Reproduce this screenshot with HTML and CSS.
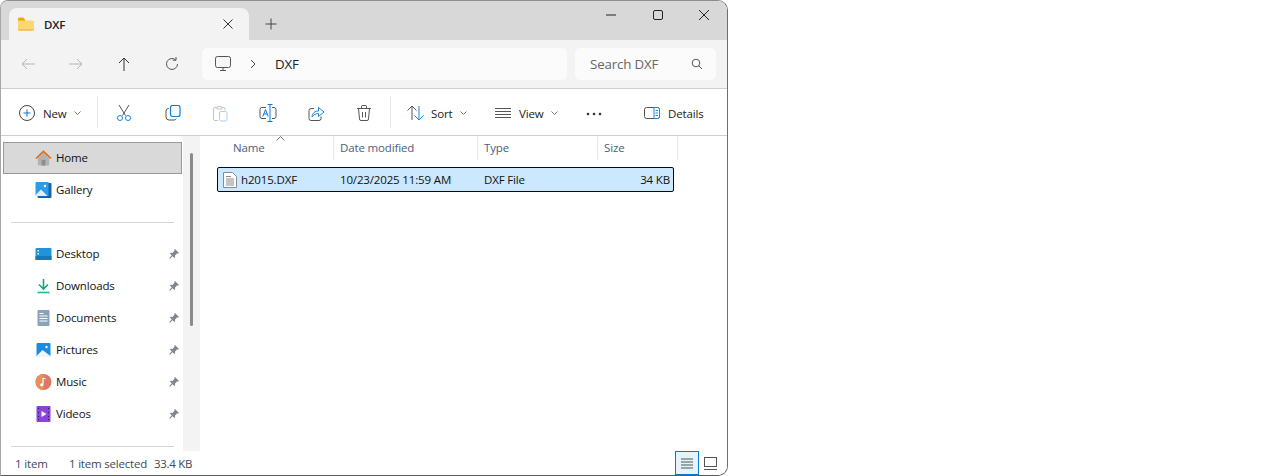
FILE: index.html
```html
<!DOCTYPE html>
<html lang="en">
<head>
<meta charset="utf-8">
<title>DXF - File Explorer</title>
<link rel="stylesheet" href="styles.css">
</head>
<body>
<div class="window">
  <header class="titlebar">
    <div class="tab">
      <svg class="tab-folder" width="16" height="14" viewBox="0 0 16 14"><path d="M0 2a1.500 1.500 0 0 1 1.500-1.500h3.600L7 2.500v2H0z" fill="#f0a800"/><path d="M0 3.500h14.500A1.500 1.500 0 0 1 16 5v7a1.500 1.500 0 0 1-1.500 1.500h-13A1.500 1.500 0 0 1 0 12z" fill="#fcd672"/><path d="M0 12.500h16v.1a1 1 0 0 1-1 .9H1a1 1 0 0 1-1-.9z" fill="#e8ac2e"/></svg>
      <span class="tab-title">DXF</span>
      <svg class="tab-close" width="12" height="12" viewBox="0 0 12 12"><path d="M1.500 1.500l9 9M10.500 1.500l-9 9" stroke="#333" fill="none"/></svg>
    </div>
    <svg class="tab-new" width="12" height="12" viewBox="0 0 12 12"><path d="M6 .5v11M.5 6h11" stroke="#444" fill="none"/></svg>
    <div class="caption">
      <svg width="46" height="16" viewBox="0 0 46 16"><path d="M17 8h10" stroke="#222" fill="none"/></svg>
      <svg width="46" height="16" viewBox="0 0 46 16"><rect x="18.500" y="3.500" width="9" height="9" rx="1.500" stroke="#222" fill="none"/></svg>
      <svg width="46" height="16" viewBox="0 0 46 16"><path d="M18 3l10 10M28 3L18 13" stroke="#222" fill="none"/></svg>
    </div>
  </header>

  <nav class="addressbar">
    <svg class="nav-icon" width="16" height="16" viewBox="0 0 16 16"><path d="M15 8H2M7 3L2 8l5 5" stroke="#b4b4b4" fill="none"/></svg>
    <svg class="nav-icon" width="16" height="16" viewBox="0 0 16 16"><path d="M1 8h13M9 3l5 5-5 5" stroke="#b4b4b4" fill="none"/></svg>
    <svg class="nav-icon" width="16" height="16" viewBox="0 0 16 16"><path d="M8 15V2M3 7l5-5 5 5" stroke="#333" fill="none"/></svg>
    <svg class="nav-icon" width="16" height="16" viewBox="0 0 16 16"><path d="M13.500 8a5.500 5.500 0 1 1-1.800-4.100M12 1v3.200H8.800" stroke="#555" fill="none"/></svg>
    <div class="path-box">
      <svg width="16" height="16" viewBox="0 0 16 16"><rect x=".5" y=".5" width="15" height="11" rx="2" fill="#f6f6f6" stroke="#555"/><path d="M5 14.500h6M8 12v2" stroke="#555" fill="none"/></svg>
      <svg class="path-sep" width="6" height="10" viewBox="0 0 6 10"><path d="M1 1l4 4-4 4" stroke="#444" fill="none"/></svg>
      <span class="path-text">DXF</span>
    </div>
    <div class="search-box">
      <span>Search DXF</span>
      <svg width="12" height="12" viewBox="0 0 12 12"><circle cx="5" cy="5" r="3.800" stroke="#555" fill="none"/><path d="M7.800 7.800L11 11" stroke="#555" fill="none"/></svg>
    </div>
  </nav>

  <div class="toolbar">
    <div class="tool tool-new">
      <svg width="16" height="16" viewBox="0 0 16 16"><circle cx="8" cy="8" r="7.500" stroke="#444" fill="none"/><path d="M8 4.500v7M4.500 8h7" stroke="#0a6fd0" fill="none"/></svg>
      <span>New</span>
      <svg class="chev" width="7" height="4" viewBox="0 0 7 4"><path d="M.5.500l3 3 3-3" stroke="#777" fill="none"/></svg>
    </div>
    <div class="divider"></div>
    <div class="icons">
      <svg width="16" height="16" viewBox="0 0 16 16"><path d="M3 0l6.500 10.500M13 0L6.500 10.500" stroke="#555" fill="none"/><circle cx="4" cy="13" r="2.500" stroke="#1a86e0" fill="none"/><circle cx="12" cy="13" r="2.500" stroke="#1a86e0" fill="none"/></svg>
      <svg width="16" height="16" viewBox="0 0 16 16"><path d="M4 3.500h-.5a2.500 2.500 0 0 0-2.500 2.500v6a3 3 0 0 0 3 3h5a2.500 2.500 0 0 0 2.300-1.500" stroke="#555" fill="none"/><rect x="5.500" y=".5" width="9.500" height="11" rx="2" stroke="#0a7ae0" stroke-width="1.200" fill="none"/></svg>
      <svg width="16" height="17" viewBox="0 0 16 17"><path d="M5 2.500H3a1.500 1.500 0 0 0-1.500 1.500v10A1.500 1.500 0 0 0 3 15.500h3M5 2.500a1 1 0 0 1 1-1h3a1 1 0 0 1 1 1V4H5z" stroke="#c4c4c4" fill="none"/><path d="M10 2.500h1.500A1.500 1.500 0 0 1 13 4v1.500" stroke="#c4c4c4" fill="none"/><rect x="7.500" y="6.500" width="7.500" height="9.500" rx="1.500" stroke="#a8d0f2" fill="none"/></svg>
      <svg width="18" height="18" viewBox="0 0 18 18"><path d="M7 3.500H3a2 2 0 0 0-2 2v7a2 2 0 0 0 2 2h4M13 3.500h2a2 2 0 0 1 2 2v7a2 2 0 0 1-2 2h-2" stroke="#555" fill="none"/><path d="M3.800 12.500L6.500 5.500l2.700 7M4.800 10h3.400" stroke="#0a7ae0" fill="none"/><path d="M8.500.5h5M8.500 17.500h5M11 .5v17" stroke="#0a7ae0" fill="none"/></svg>
      <svg width="17" height="17" viewBox="0 0 17 17"><path d="M6 3.500H3a2 2 0 0 0-2 2v8a2 2 0 0 0 2 2h8a2 2 0 0 0 2-2v-2" stroke="#555" fill="none"/><path d="M4 12c.3-4 2.800-6 6.500-6V2.500L16 7l-5.500 4.500V8.500C8 8.500 5.500 9.500 4 12z" stroke="#1a86e0" fill="#fff"/></svg>
      <svg width="16" height="16" viewBox="0 0 16 16"><path d="M1 3.500h14M5.500 3V1.500a1 1 0 0 1 1-1h3a1 1 0 0 1 1 1V3M2.500 3.500l1 10.500a1.500 1.500 0 0 0 1.500 1.500h6a1.500 1.500 0 0 0 1.500-1.500l1-10.500M6.500 7v5.500M9.500 7v5.500" stroke="#555" fill="none"/></svg>
    </div>
    <div class="divider divider-two"></div>
    <div class="tool tool-sort">
      <svg width="17" height="16" viewBox="0 0 17 16"><path d="M5 15V1M.5 5.500L5 1l4.500 4.500" stroke="#555" fill="none"/><path d="M12 1v14M7.500 10.500L12 15l4.500-4.500" stroke="#1a86e0" fill="none"/></svg>
      <span>Sort</span>
      <svg class="chev" width="7" height="4" viewBox="0 0 7 4"><path d="M.5.500l3 3 3-3" stroke="#777" fill="none"/></svg>
    </div>
    <div class="tool tool-view">
      <svg width="16" height="10" viewBox="0 0 16 10"><path d="M0 .5h16M0 3.500h16M0 6.500h16M0 9.500h16" stroke="#555" fill="none"/></svg>
      <span>View</span>
      <svg class="chev" width="7" height="4" viewBox="0 0 7 4"><path d="M.5.500l3 3 3-3" stroke="#777" fill="none"/></svg>
    </div>
    <svg class="more" width="16" height="4" viewBox="0 0 16 4"><circle cx="2" cy="2" r="1.300" fill="#333"/><circle cx="8" cy="2" r="1.300" fill="#333"/><circle cx="14" cy="2" r="1.300" fill="#333"/></svg>
    <div class="tool tool-details">
      <svg width="16" height="12" viewBox="0 0 16 12"><rect x=".5" y=".5" width="15" height="11" rx="2" stroke="#555" fill="none"/><path d="M10 .5h3.500a2 2 0 0 1 2 2v7a2 2 0 0 1-2 2H10z" stroke="#1a86e0" fill="#fff"/><path d="M11.500 3.500h2.500M11.500 6h2.500M11.500 8.500h2.500" stroke="#1a86e0" fill="none"/></svg>
      <span>Details</span>
    </div>
  </div>

  <div class="body">
    <aside class="sidebar">
      <div class="nav-group">
        <div class="nav-item nav-active">
          <svg width="17" height="16" viewBox="0 0 18 16"><path d="M3 8v6.500A1.500 1.500 0 0 0 4.500 16h9a1.500 1.500 0 0 0 1.500-1.500V8L9 2z" fill="#b3b3b3"/><rect x="7" y="10" width="4" height="6" fill="#8e8e8e"/><path d="M1 8.500L9 1l8 7.500" stroke="#e26a10" stroke-width="1.600" fill="none"/></svg>
          <span>Home</span>
        </div>
        <div class="nav-item">
          <svg width="17" height="16" viewBox="0 0 16 16"><rect x="2" y="1" width="14" height="15" rx="1" fill="#1664ad"/><path d="M0 1a1 1 0 0 1 1-1h12v14H1a1 1 0 0 1-1-1z" fill="#2f9ae8"/><path d="M0 13l5.500-5.500L12 14H1a1 1 0 0 1-1-1z" fill="#dcedfb"/><circle cx="9.500" cy="4" r="1.300" fill="#fff"/></svg>
          <span>Gallery</span>
        </div>
      </div>
      <div class="nav-rule"></div>
      <div class="nav-group">
        <div class="nav-item">
          <svg width="17" height="12" viewBox="0 0 16 12"><rect width="16" height="12" rx="1" fill="#1f95d8"/><rect y="8" width="16" height="4" fill="#1578b8"/><rect x="2" y="2" width="1.500" height="1.500" fill="#e8f6ff"/><rect x="2" y="5" width="1.500" height="1.500" fill="#e8f6ff"/></svg>
          <span>Desktop</span>
          <svg class="pin" width="10" height="10" viewBox="0 0 10 10"><path d="M6 0l4 4-1 .6-1-.2L6 6.500l.2 1.800-.8.700L3.600 7.200 1 9.800.2 9l2.600-2.600L1 4.600l.7-.8 1.800.2 2-2.200-.2-1z" fill="#7d8790"/></svg>
        </div>
        <div class="nav-item">
          <svg width="17" height="16" viewBox="0 0 16 16"><path d="M8 1v10M3.500 6.500L8 11l4.500-4.500" stroke="#19a37e" stroke-width="1.600" fill="none"/><path d="M2 14.500h12" stroke="#1fb893" stroke-width="1.600" fill="none"/></svg>
          <span>Downloads</span>
          <svg class="pin" width="10" height="10" viewBox="0 0 10 10"><path d="M6 0l4 4-1 .6-1-.2L6 6.500l.2 1.800-.8.700L3.600 7.200 1 9.800.2 9l2.600-2.600L1 4.600l.7-.8 1.800.2 2-2.200-.2-1z" fill="#7d8790"/></svg>
        </div>
        <div class="nav-item">
          <svg width="17" height="16" viewBox="0 0 12 16"><rect width="12" height="16" rx="1" fill="#8ba2bd"/><path d="M2 3.500h4M2 6h8M2 8.500h8M2 11h8" stroke="#fff" fill="none"/></svg>
          <span>Documents</span>
          <svg class="pin" width="10" height="10" viewBox="0 0 10 10"><path d="M6 0l4 4-1 .6-1-.2L6 6.500l.2 1.800-.8.700L3.600 7.200 1 9.800.2 9l2.600-2.600L1 4.600l.7-.8 1.800.2 2-2.200-.2-1z" fill="#7d8790"/></svg>
        </div>
        <div class="nav-item">
          <svg width="17" height="14" viewBox="0 0 14 14"><rect width="14" height="14" rx="1" fill="#1a8de0"/><path d="M0 13l6-6 8 6v1H0z" fill="#eef7ff"/><circle cx="10" cy="4" r="1.200" fill="#fff"/></svg>
          <span>Pictures</span>
          <svg class="pin" width="10" height="10" viewBox="0 0 10 10"><path d="M6 0l4 4-1 .6-1-.2L6 6.500l.2 1.800-.8.700L3.600 7.200 1 9.800.2 9l2.600-2.600L1 4.600l.7-.8 1.800.2 2-2.200-.2-1z" fill="#7d8790"/></svg>
        </div>
        <div class="nav-item">
          <svg width="17" height="16" viewBox="0 0 16 16"><circle cx="8" cy="8" r="8" fill="#d97a68"/><path d="M0 8a8 8 0 0 1 8-8v16a8 8 0 0 1-8-8z" fill="#e8905a"/><path d="M7.500 4v6.500" stroke="#fff" stroke-width="1.200" fill="none"/><circle cx="6.300" cy="10.800" r="1.600" fill="#fff"/><path d="M7.500 4l2.500 1" stroke="#fff" stroke-width="1.200" fill="none"/></svg>
          <span>Music</span>
          <svg class="pin" width="10" height="10" viewBox="0 0 10 10"><path d="M6 0l4 4-1 .6-1-.2L6 6.500l.2 1.800-.8.700L3.600 7.200 1 9.800.2 9l2.600-2.600L1 4.600l.7-.8 1.800.2 2-2.200-.2-1z" fill="#7d8790"/></svg>
        </div>
        <div class="nav-item">
          <svg width="17" height="16" viewBox="0 0 14 16"><rect width="14" height="16" rx="1" fill="#8a44d8"/><path d="M5 5l5 3-5 3z" fill="#fff"/><path d="M1.500 2.500h1M1.500 6.500h1M1.500 10.500h1M1.500 13.500h1M11.500 2.500h1M11.500 6.500h1M11.500 10.500h1M11.500 13.500h1" stroke="#2c1458" fill="none"/></svg>
          <span>Videos</span>
          <svg class="pin" width="10" height="10" viewBox="0 0 10 10"><path d="M6 0l4 4-1 .6-1-.2L6 6.500l.2 1.800-.8.700L3.600 7.200 1 9.800.2 9l2.600-2.600L1 4.600l.7-.8 1.800.2 2-2.200-.2-1z" fill="#7d8790"/></svg>
        </div>
      </div>
      <div class="nav-rule nav-rule-last"></div>
    </aside>
    <div class="nav-scroll"><div class="nav-thumb"></div></div>
    <main class="files">
      <div class="file-head">
        <div class="col col-name">Name
          <svg class="sort-caret" width="9" height="5" viewBox="0 0 9 5"><path d="M.5 4.500l4-4 4 4" stroke="#777" fill="none"/></svg>
        </div>
        <div class="col col-date">Date modified</div>
        <div class="col col-type">Type</div>
        <div class="col col-size">Size</div>
      </div>
      <div class="file-row">
        <div class="cell cell-name">
          <svg width="14" height="16" viewBox="0 0 14 16"><path d="M.5.500h9l4 4v11H.5z" fill="#fdfdfd" stroke="#8a8a8a"/><path d="M3 4.500h5M3 7h8M3 9h8M3 11h8M3 13h8" stroke="#8a8a8a" fill="none"/></svg>
          <span>h2015.DXF</span>
        </div>
        <div class="cell cell-date">10/23/2025 11:59 AM</div>
        <div class="cell cell-type">DXF File</div>
        <div class="cell cell-size">34 KB</div>
      </div>
    </main>
  </div>

  <footer class="statusbar">
    <span class="status-count">1 item</span>
    <span class="status-sel">1 item selected</span>
    <span class="status-size">33.4 KB</span>
    <div class="view-switch">
      <div class="view-btn view-on"><svg width="14" height="11" viewBox="0 0 14 11"><path d="M1 1h12M1 4h12M1 7h12M1 10h12" stroke="#555" fill="none" stroke-width="1.200"/></svg></div>
      <div class="view-btn"><svg width="14" height="13" viewBox="0 0 14 13"><rect x=".5" y=".5" width="12" height="9" stroke="#555" fill="none"/><path d="M0 12.500h13" stroke="#555" fill="none"/></svg></div>
    </div>
  </footer>
</div>
</body>
</html>
```

FILE: styles.css
```css
* { box-sizing: border-box; }
html, body { margin: 0; padding: 0; height: 100%; background: #fff; overflow: hidden; }
body { font-family: "Open Sans", "Noto Sans", sans-serif; font-size: 11.5px; letter-spacing: -0.15px; color: #1a1a1a; }
svg { display: block; flex: none; }

.window {
  width: 728px; height: 476px; display: flex; flex-direction: column;
  background: #fff; overflow: hidden;
  border: 1px solid #8e8e8e; border-left-color: #a6a6a6; border-bottom-color: #5a5a5a; border-right-color: #6e6e6e;
  border-radius: 8px 10px 10px 0;
}

.titlebar { height: 39px; flex: none; background: #d9d8d8; display: flex; align-items: flex-end; padding-left: 8px; }
.tab { width: 240px; height: 32px; background: #f3f3f3; border-radius: 8px 8px 0 0; display: flex; align-items: center; padding: 0 15px 0 9px; }
.tab-title { margin-left: 10px; font-weight: 600; flex: 1; color: #222; }
.tab-new { margin: 0 0 10px 16px; }
.caption { margin-left: auto; display: flex; align-self: flex-start; margin-top: 6px; }

.addressbar { height: 49px; flex: none; background: #f3f3f3; border-bottom: 1px solid #cfcfcf; display: flex; align-items: center; padding: 0 11px 1px 19px; }
.nav-icon { margin-right: 32px; }
.addressbar .nav-icon:nth-child(4) { margin-right: 22px; }
.path-box { width: 365px; height: 32px; background: #fbfbfb; border-radius: 5px; display: flex; align-items: center; padding-left: 13px; }
.path-sep { margin-left: 19px; }
.path-text { margin-left: 19px; font-size: 13.3px; color: #222; }
.search-box { width: 141px; height: 32px; margin-left: 8px; background: #fbfbfb; border-radius: 5px; display: flex; align-items: center; justify-content: space-between; padding: 0 13px 0 15px; font-size: 13.3px; color: #666; }

.toolbar { height: 47px; flex: none; background: #fff; border-bottom: 1px solid #cfcfcf; display: flex; align-items: center; padding-top: 2px; }
.tool { display: flex; align-items: center; color: #222; }
.tool-new { margin-left: 18px; }
.tool-new span { margin-left: 8px; width: 24px; }
.chev { margin-left: 7px; }
.divider { width: 1px; height: 32px; background: #e4e4e4; margin-left: 16px; margin-top: -2px; }
.icons { display: flex; align-items: center; gap: 31px; margin-left: 18px; }
.icons svg:first-child { margin-right: 2px; }
.divider-two { margin-left: 18px; }
.tool-sort { margin-left: 16px; }
.tool-sort span { margin-left: 7px; width: 22px; }
.tool-view { margin-left: 28px; }
.tool-view span { margin-left: 8px; width: 26px; }
.tool-view .chev { margin-left: 6px; }
.more { margin-left: 28px; margin-top: 2px; }
.tool-details { margin-left: 42px; }
.tool-details span { margin-left: 8px; }

.body { flex: 1; display: flex; min-height: 0; }
.sidebar { width: 182px; flex: none; padding: 6px 1px 0 2px; background: #fff; }
.nav-item { height: 32px; display: flex; align-items: center; position: relative; padding-left: 32px; color: #111; }
.nav-item > svg:first-child { margin-right: 4px; }
.nav-item span { margin-bottom: 2px; }
.nav-active { background: #d9d9d9; border: 1px solid #999; padding-left: 31px; }
.pin { position: absolute; left: 166px; top: 11px; }
.nav-rule { height: 1px; background: #d5d5d5; margin: 16px 8px 15px 8px; }
.nav-rule-last { margin-bottom: 0; }

.nav-scroll { width: 17px; flex: none; background: #f3f3f3; padding: 17px 0 0 7px; }
.nav-thumb { width: 3px; height: 173px; background: #8a8a8a; border-radius: 2px; }

.files { flex: 1; background: #fff; padding-left: 16px; min-width: 0; }
.file-head { height: 25px; display: flex; color: #4c607a; }
.col { height: 24px; border-right: 1px solid #e5e5e5; padding: 4px 0 0 6px; flex: none; position: relative; }
.col-name { width: 118px; padding-left: 17px; }
.col-date { width: 144px; }
.col-type { width: 120px; }
.col-size { width: 80px; }
.sort-caret { position: absolute; left: 60px; top: 0; }

.file-row { width: 457px; height: 25px; margin: 6px 0 0 1px; display: flex; align-items: center; background: #cce8ff; border: 1px solid #0a0a0a; border-radius: 2px; color: #111; }
.cell { flex: none; }
.cell-name { width: 122px; display: flex; align-items: center; gap: 4px; padding-left: 5px; }
.cell-date { width: 144px; }
.cell-type { width: 120px; }
.cell-size { width: 66px; text-align: right; }

.statusbar { height: 24px; flex: none; background: #fff; display: flex; align-items: center; position: relative; padding-left: 14px; color: #3c4a5a; }
.status-count { width: 54px; }
.status-sel { margin-right: 7px; letter-spacing: -0.2px; }
.status-size { letter-spacing: -0.3px; }
.view-switch { margin-left: auto; display: flex; align-items: center; margin-right: 4px; }
.view-btn { width: 24px; height: 24px; display: flex; align-items: center; justify-content: center; }
.view-on { background: #e5f3fb; border: 1px solid #0a78d0; }
```
